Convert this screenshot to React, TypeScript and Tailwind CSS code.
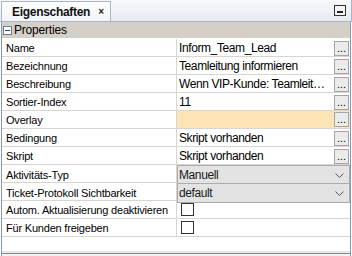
import { ReactNode } from "react";

type Row = {
    label: string;
    value?: string;
    kind: "text" | "select" | "check";
    button?: boolean;
    highlight?: boolean;
};

const rows: Row[] = [
    { label: "Name", value: "Inform_Team_Lead", kind: "text", button: true },
    { label: "Bezeichnung", value: "Teamleitung informieren", kind: "text", button: true },
    { label: "Beschreibung", value: "Wenn VIP-Kunde: Teamleitung informieren", kind: "text", button: true },
    { label: "Sortier-Index", value: "11", kind: "text", button: true },
    { label: "Overlay", value: "", kind: "text", button: true, highlight: true },
    { label: "Bedingung", value: "Skript vorhanden", kind: "text", button: true },
    { label: "Skript", value: "Skript vorhanden", kind: "text", button: true },
    { label: "Aktivitäts-Typ", value: "Manuell", kind: "select" },
    { label: "Ticket-Protokoll Sichtbarkeit", value: "default", kind: "select" },
    { label: "Autom. Aktualisierung deaktivieren", kind: "check" },
    { label: "Für Kunden freigeben", kind: "check" },
];

function DotsButton() {
    return (
        <div className="w-[15px] h-[15px] shrink-0 mr-[1px] border border-[#a5a5a5] bg-[#ebebeb] flex items-end justify-center text-[11px] leading-[11px] text-black pb-[1px]">
            ...
        </div>
    );
}

function Chevron() {
    return (
        <svg width="9" height="6" viewBox="0 0 9 6" className="mr-[5px] mt-[2px]">
            <path d="M0.5 0.5 L4.5 4.5 L8.5 0.5" fill="none" stroke="#555" strokeWidth="1" />
        </svg>
    );
}

function ValueCell({ row }: { row: Row }): ReactNode {
    if (row.kind === "select") {
        return (
            <div className="h-full flex items-center justify-between bg-[#e3e3e3] border border-[#acacac] pl-[1px]">
                <span className="text-[12px] tracking-[-0.4px] text-[#1a1a1a]">{row.value}</span>
                <Chevron />
            </div>
        );
    }
    if (row.kind === "check") {
        return (
            <div className="h-full flex items-center pl-[4px]">
                <div className="w-[13px] h-[13px] border border-[#333] bg-white" />
            </div>
        );
    }
    return (
        <div className={`h-full flex items-center justify-between pl-[2px] ${row.highlight ? "bg-[#fce4b5]" : ""}`}>
            <span className="text-[12px] tracking-[-0.4px] text-black truncate pr-[3px] min-w-0">{row.value}</span>
            {row.button && <DotsButton />}
        </div>
    );
}

export default function App() {
    return (
        <div className="w-[352px] h-[256px] bg-white overflow-hidden flex flex-col" style={{ fontFamily: '"Liberation Sans", Arial, sans-serif' }}>
            {/* tab header */}
            <div className="h-[22px] shrink-0 flex items-end justify-between bg-gradient-to-b from-[#f7f9fb] to-[#e6eaf0] border-b border-[#a9b6c7] border-r border-[#8fa3bd]">
                <div className="h-[20px] w-[110px] ml-[1px] flex items-center gap-[8px] pl-[10px] bg-gradient-to-b from-white to-[#f1f4f8] border border-b-0 border-[#a9b6c7]">
                    <span className="text-[12px] font-bold tracking-[-0.3px] text-[#111]">Eigenschaften</span>
                    <span className="text-[10px] font-bold text-[#222] leading-none">×</span>
                </div>
                <div className="self-center mr-[5px] w-[12px] h-[11px] border border-[#333] bg-[#f4f4f4] flex items-end justify-center pb-[2px]">
                    <div className="w-[6px] h-[2px] bg-[#222]" />
                </div>
            </div>

            {/* body */}
            <div className="flex-1 flex flex-col ml-[1px] w-[350px] border-l border-r border-[#8599b4]">
                <div className="h-[16px] shrink-0 bg-[#d4d0c8] flex items-center gap-[2px] pl-[1px]">
                    <div className="w-[9px] h-[9px] border border-[#6e7f99] bg-white flex items-center justify-center">
                        <div className="w-[5px] h-px bg-[#2a3f6a]" />
                    </div>
                    <span className="text-[12px] tracking-[-0.2px] text-black">Properties</span>
                </div>
                <div className="h-px bg-white" />
                {rows.map((row) => (
                    <div key={row.label} className="grid grid-cols-[174px_1px_1fr] h-[18px] border-b border-[#d8d5ce]">
                        <div className="flex items-center pl-[4px] pt-[1px] text-[11px] tracking-[-0.2px] text-black whitespace-nowrap overflow-hidden">
                            {row.label}
                        </div>
                        <div className="bg-[#d8d5ce]" />
                        <div className="min-w-0">
                            <ValueCell row={row} />
                        </div>
                    </div>
                ))}
                <div className="flex-1 bg-white" />
                <div className="h-[2px] bg-[#e8e8e8]" />
                <div className="h-[3px] bg-[#f2f2f2] border-t border-[#8a8a8a]" />
            </div>
        </div>
    );
}
